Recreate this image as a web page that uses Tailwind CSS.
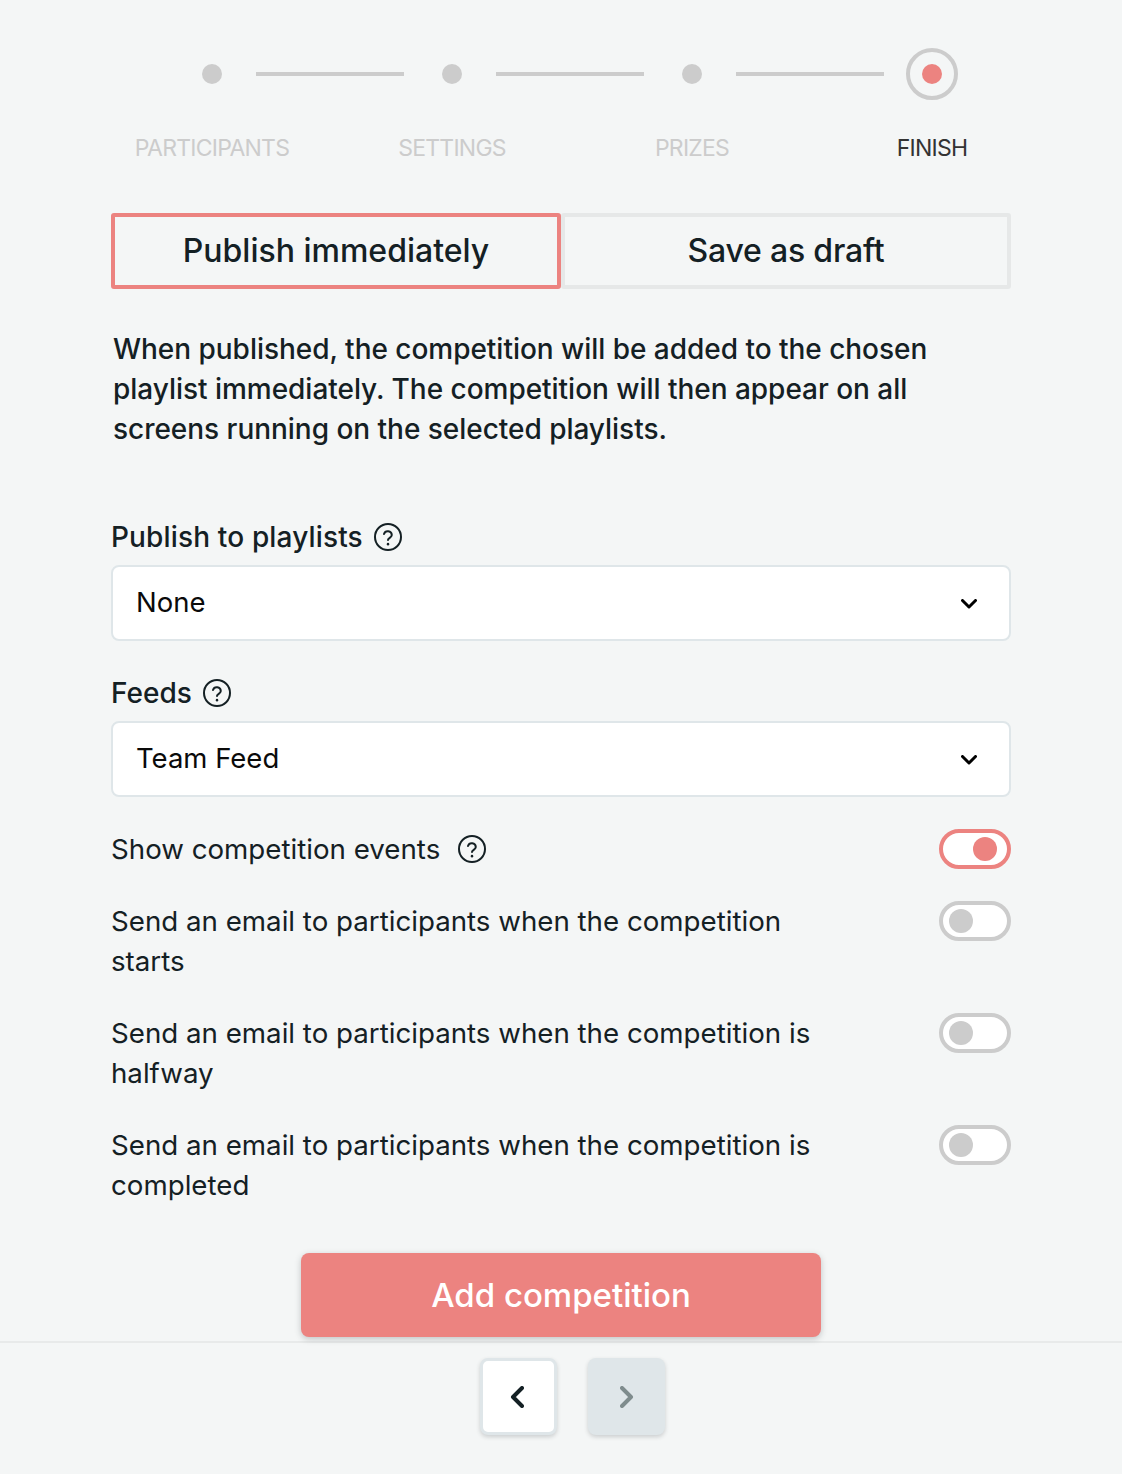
<!DOCTYPE html>
<html lang="en">

<head>
    <meta charset="UTF-8">
    <meta name="viewport" content="width=device-width, initial-scale=1.0">
    <title>Add competition</title>
    <script src="https://cdn.jsdelivr.net/npm/@tailwindcss/browser@4"></script>
</head>

<body class="bg-[#f4f6f6] font-['Inter',sans-serif] text-[#142024] h-[1474px] overflow-hidden">
    <div class="w-[900px] ml-[111px] pt-[48px]">
        <!-- stepper -->
        <div class="w-[960px] -ml-[19px] grid grid-cols-4">
            <div class="relative flex h-[52px] items-center justify-center">
                <div class="w-5 h-5 rounded-full bg-[#cccccc]"></div>
                <div class="absolute left-[164px] w-[148px] h-1 bg-[#cccccc]"></div>
            </div>
            <div class="relative flex h-[52px] items-center justify-center">
                <div class="w-5 h-5 rounded-full bg-[#cccccc]"></div>
                <div class="absolute left-[164px] w-[148px] h-1 bg-[#cccccc]"></div>
            </div>
            <div class="relative flex h-[52px] items-center justify-center">
                <div class="w-5 h-5 rounded-full bg-[#cccccc]"></div>
                <div class="absolute left-[164px] w-[148px] h-1 bg-[#cccccc]"></div>
            </div>
            <div class="flex h-[52px] items-center justify-center">
                <div class="flex w-[52px] h-[52px] items-center justify-center rounded-full border-4 border-[#cccccc]">
                    <div class="w-5 h-5 rounded-full bg-[#ec8380]"></div>
                </div>
            </div>
            <div class="mt-[32px] h-[32px] text-center text-[23px] leading-[32px] tracking-[-0.75px] text-[#cccccc]">PARTICIPANTS</div>
            <div class="mt-[32px] h-[32px] text-center text-[23px] leading-[32px] tracking-[-0.75px] text-[#cccccc]">SETTINGS</div>
            <div class="mt-[32px] h-[32px] text-center text-[23px] leading-[32px] tracking-[-0.75px] text-[#cccccc]">PRIZES</div>
            <div class="mt-[32px] h-[32px] text-center text-[23px] leading-[32px] tracking-[-0.75px] text-[#333333]">FINISH</div>
        </div>

        <!-- publish mode -->
        <div class="mt-[49px] flex">
            <div class="flex w-[450px] h-[76px] items-center justify-center rounded-[3px] border-4 border-[#ec8380] pb-[1px] text-[32px] font-medium">Publish immediately</div>
            <div class="flex w-[450px] h-[76px] items-center justify-center rounded-[3px] border-4 border-[#e6e8e8] pb-[1px] text-[32px] tracking-[-0.2px] font-medium">Save as draft</div>
        </div>

        <p class="mt-[40px] pl-[2px] text-[28px] leading-[40px] tracking-[-0.03px] font-medium">When published, the competition will be added to the chosen<br>playlist immediately. The competition will then appear on all<br>screens running on the selected playlists.</p>

        <!-- playlists -->
        <div class="mt-[68px] flex h-[40px] items-center gap-[11px] text-[28px] font-medium">
            <span class="tracking-[0.15px]">Publish to playlists</span>
            <svg class="w-7 h-7" viewBox="0 0 28 28" fill="none" stroke="#142024" stroke-width="2" stroke-linecap="round"><circle cx="14" cy="14" r="13" /><path d="M10 11a4 4 0 0 1 7.8 1c0 2.6-3.8 3-3.8 5" /><path d="M14 21v.2" stroke-width="2.5" /></svg>
        </div>
        <div class="mt-[8px] flex h-[76px] items-center justify-between rounded-lg border-2 border-[#dfe6e9] bg-white pl-[23px] pr-[32px] text-[27.5px] text-[#0a0a0a]">
            <span>None</span>
            <svg class="mt-[2px] w-4 h-[10px]" viewBox="0 0 16 10" fill="none" stroke="#000000" stroke-width="3" stroke-linecap="round" stroke-linejoin="round"><path d="M1.5 1.5 8 8l6.5-6.5" /></svg>
        </div>

        <!-- feeds -->
        <div class="mt-[32px] flex h-[40px] items-center gap-[11px] text-[28px] font-medium">
            <span>Feeds</span>
            <svg class="w-7 h-7" viewBox="0 0 28 28" fill="none" stroke="#142024" stroke-width="2" stroke-linecap="round"><circle cx="14" cy="14" r="13" /><path d="M10 11a4 4 0 0 1 7.8 1c0 2.6-3.8 3-3.8 5" /><path d="M14 21v.2" stroke-width="2.5" /></svg>
        </div>
        <div class="mt-[8px] flex h-[76px] items-center justify-between rounded-lg border-2 border-[#dfe6e9] bg-white pl-[23px] pr-[32px] text-[27.5px] text-[#0a0a0a]">
            <span>Team Feed</span>
            <svg class="mt-[2px] w-4 h-[10px]" viewBox="0 0 16 10" fill="none" stroke="#000000" stroke-width="3" stroke-linecap="round" stroke-linejoin="round"><path d="M1.5 1.5 8 8l6.5-6.5" /></svg>
        </div>

        <!-- toggles -->
        <div class="mt-[32px] flex flex-col gap-[32px] text-[27.7px] leading-[40px]">
            <div class="flex items-start justify-between">
                <div class="flex items-center gap-[18px]">
                    <span>Show competition events</span>
                    <svg class="w-7 h-7" viewBox="0 0 28 28" fill="none" stroke="#142024" stroke-width="2" stroke-linecap="round"><circle cx="14" cy="14" r="13" /><path d="M10 11a4 4 0 0 1 7.8 1c0 2.6-3.8 3-3.8 5" /><path d="M14 21v.2" stroke-width="2.5" /></svg>
                </div>
                <div class="flex w-[72px] h-[40px] items-center justify-end rounded-full border-4 border-[#ec8380] bg-white pr-[10px]">
                    <div class="w-6 h-6 rounded-full bg-[#ec8380]"></div>
                </div>
            </div>
            <div class="flex items-start justify-between">
                <span class="w-[720px]">Send an email to participants when the competition starts</span>
                <div class="flex w-[72px] h-[40px] items-center rounded-full border-4 border-[#cccccc] bg-white pl-[6px]">
                    <div class="w-6 h-6 rounded-full bg-[#cccccc]"></div>
                </div>
            </div>
            <div class="flex items-start justify-between">
                <span class="w-[720px]">Send an email to participants when the competition is halfway</span>
                <div class="flex w-[72px] h-[40px] items-center rounded-full border-4 border-[#cccccc] bg-white pl-[6px]">
                    <div class="w-6 h-6 rounded-full bg-[#cccccc]"></div>
                </div>
            </div>
            <div class="flex items-start justify-between">
                <span class="w-[720px]">Send an email to participants when the competition is completed</span>
                <div class="flex w-[72px] h-[40px] items-center rounded-full border-4 border-[#cccccc] bg-white pl-[6px]">
                    <div class="w-6 h-6 rounded-full bg-[#cccccc]"></div>
                </div>
            </div>
        </div>

        <div class="mt-[48px] flex justify-center">
            <button class="w-[520px] h-[84px] rounded-lg bg-[#ec8380] pt-[1px] text-[33px] font-medium text-white shadow-[0_2px_6px_rgba(45,52,54,0.25)]">Add competition</button>
        </div>
    </div>

    <!-- pager -->
    <div class="mt-[4px] flex justify-center gap-[31px] border-t-2 border-[#e8eaea] pt-[15px] pl-[23px]">
        <button class="flex w-[77px] h-[77px] items-center justify-center rounded-lg border-[3px] border-[#dfe6e9] bg-white pr-[4px] shadow-[0_2px_4px_rgba(45,52,54,0.2)]">
            <svg class="w-[14px] h-[22px]" viewBox="0 0 14 22" fill="none" stroke="#142024" stroke-width="4" stroke-linecap="round" stroke-linejoin="round"><path d="M12 2 3 11l9 9" /></svg>
        </button>
        <button class="flex w-[77px] h-[77px] items-center justify-center rounded-lg bg-[#dfe6e9] pl-[1px] shadow-[0_2px_4px_rgba(45,52,54,0.2)]">
            <svg class="w-[14px] h-[22px]" viewBox="0 0 14 22" fill="none" stroke="#7f8c8d" stroke-width="4" stroke-linecap="round" stroke-linejoin="round"><path d="m2 2 9 9-9 9" /></svg>
        </button>
    </div>
</body>

</html>
